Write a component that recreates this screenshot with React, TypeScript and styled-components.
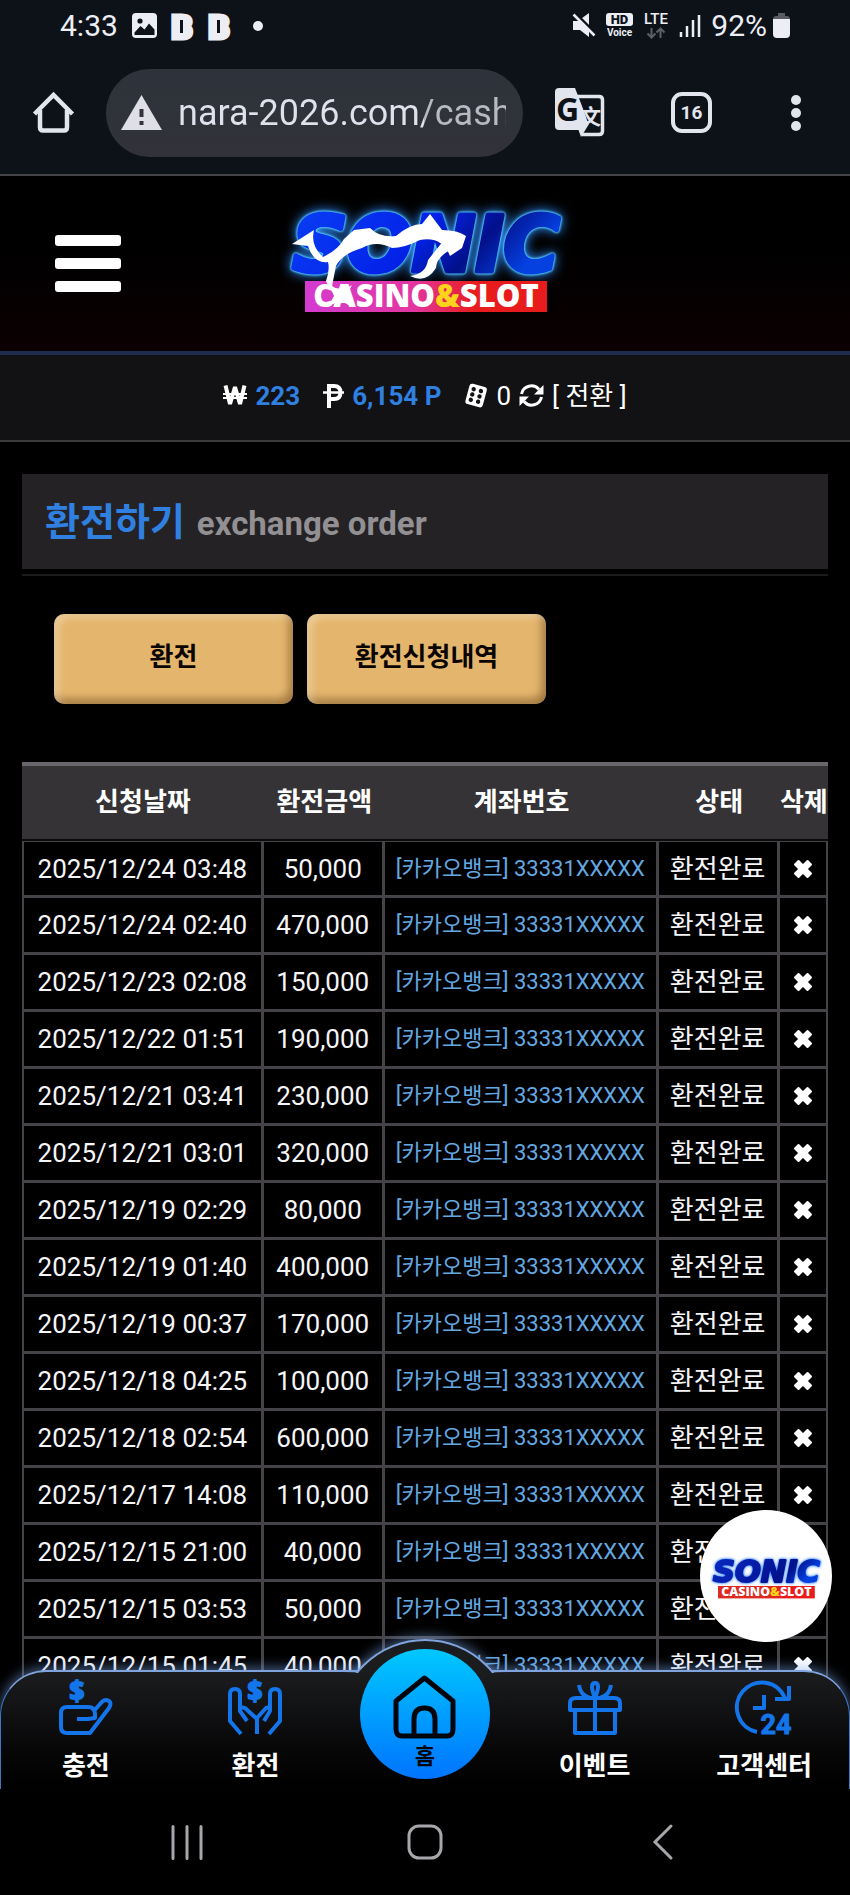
import { ReactElement, ReactNode } from 'react';
import styled, { createGlobalStyle } from 'styled-components';

const BLUE = '#2f80e0';
const ICON_BLUE = '#1474ea';
const LINE = '#454347';

const GlobalStyle = createGlobalStyle`
    *, *::before, *::after {
        box-sizing: border-box;
    }
    body {
        margin: 0;
        background: #000;
        color: #fff;
        font-family: Roboto, 'Noto Sans CJK KR', sans-serif;
        font-size: 26px;
        line-height: 32px;
    }
    button {
        padding: 0;
        border: 0;
        background: none;
        color: inherit;
        font: inherit;
        cursor: pointer;
    }
    a {
        color: inherit;
        text-decoration: none;
    }
    svg {
        display: block;
        flex: none;
        overflow: visible;
    }
`;

const Screen = styled.div`
    display: flex;
    flex-direction: column;
    height: 100vh;
    overflow: hidden;
`;

const StatusBar = styled.div`
    display: flex;
    align-items: center;
    justify-content: space-between;
    flex: none;
    height: 51px;
    padding: 0 60px;
    background: #0d1219;
    color: #eceef4;
    font-size: 30px;
`;

const StatusGroup = styled.div<{ $gap: number }>`
    display: flex;
    align-items: center;
    gap: ${({ $gap }) => $gap}px;
`;

const BrowserBar = styled.div`
    display: flex;
    align-items: center;
    gap: 32px;
    flex: none;
    height: 125px;
    padding: 0 36px 0 33px;
    border-bottom: 2px solid #444448;
    background: #0d1219;
    color: #e2e4ee;
`;

const Address = styled.label`
    display: flex;
    align-items: center;
    gap: 16px;
    flex: 1 1 auto;
    min-width: 0;
    height: 88px;
    padding: 0 17px 0 15px;
    border-radius: 44px;
    background: linear-gradient(#2d333b, #323239);
`;

const AddressInput = styled.input`
    flex: 1 1 auto;
    min-width: 0;
    padding: 0;
    border: 0;
    outline: 0;
    background: linear-gradient(90deg, #dfe1ec 246px, #b7bac3 246px);
    background-clip: text;
    color: transparent;
    font-family: Roboto, sans-serif;
    font-size: 36px;
    line-height: 48px;
`;

const BrowserActions = styled.div`
    display: flex;
    align-items: center;
    gap: 66px;
`;

const TabCount = styled.button`
    width: 41px;
    height: 41px;
    border: 4px solid #e2e4ee;
    border-radius: 11px;
    font-size: 19px;
    font-weight: 700;
    line-height: 32px;
`;

const Viewport = styled.div`
    position: relative;
    flex: 1 1 auto;
    min-height: 0;
    overflow: hidden;
`;

const Scroller = styled.div`
    height: 100%;
    padding-bottom: 118px;
    overflow-y: auto;
    scrollbar-width: none;
`;

const Header = styled.header`
    display: grid;
    grid-template-columns: 1fr auto 1fr;
    align-items: center;
    height: 179px;
    padding: 0 55px;
    border-bottom: 4px solid #1e2c4e;
    background: linear-gradient(#000 40%, #0b0002);
`;

const LogoLink = styled.a`
    padding-bottom: 16px;
`;

const MenuButton = styled.button`
    display: flex;
    flex-direction: column;
    gap: 12px;
    width: 66px;
    > span {
        height: 11px;
        border-radius: 3px;
        background: #fff;
    }
`;

const Wallet = styled.div`
    display: flex;
    align-items: center;
    justify-content: center;
    gap: 23px;
    height: 87px;
    padding-bottom: 4px;
    border-bottom: 2px solid #3b3a3d;
    background: #121113;
`;

const WalletItem = styled.div`
    display: flex;
    align-items: center;
    gap: 8px;
    white-space: nowrap;
    > strong {
        color: ${BLUE};
        font-weight: 700;
    }
`;

const Content = styled.main`
    padding: 32px 22px 0;
`;

const TitleBar = styled.div`
    padding-bottom: 5px;
    border-bottom: 2px solid #1a1a1c;
`;

const Title = styled.h1`
    display: flex;
    align-items: baseline;
    gap: 12px;
    height: 95px;
    margin: 0;
    padding: 20px 23px;
    background: #242225;
    color: ${BLUE};
    font-size: 38px;
    font-weight: 700;
    line-height: 56px;
    > small {
        color: #929093;
        font-size: 33px;
    }
`;

const Tabs = styled.div`
    display: flex;
    gap: 14px;
    padding: 38px 32px 58px;
`;

const TabButton = styled.button`
    flex: 0 1 239px;
    height: 90px;
    padding-bottom: 4px;
    border-radius: 10px;
    background: #e4b66d;
    box-shadow: inset 5px 4px 7px rgba(255, 255, 255, 0.3), inset -4px -5px 8px rgba(60, 30, 0, 0.4);
    color: #0a0503;
    font-weight: 700;
`;

const Table = styled.table`
    width: 100%;
    table-layout: fixed;
    border-spacing: 0;
    border-top: 4px solid #69676b;
    text-align: center;
    white-space: nowrap;
`;

const Col = styled.col<{ $width: number }>`
    width: ${({ $width }) => $width}%;
`;

const Th = styled.th`
    height: 75px;
    padding: 0 0 2px;
    border-bottom: 2px solid #0a0a0b;
    background: #353336;
    font-weight: 700;
`;

const Td = styled.td<{ $account?: boolean }>`
    height: 57px;
    padding: 0;
    border-right: 3px solid ${LINE};
    border-bottom: 3px solid ${LINE};
    color: ${({ $account }) => ($account ? '#64a9e2' : '#f6f6f8')};
    font-size: ${({ $account }) => ($account ? 22 : 26)}px;
    &:first-child {
        border-left: 2px solid ${LINE};
    }
    &:last-child {
        border-right-width: 2px;
    }
    tr:first-child > & {
        border-top: 1px solid ${LINE};
    }
`;

const DeleteButton = styled.button`
    display: block;
    margin: 0 auto;
`;

const Messenger = styled.a`
    position: absolute;
    right: 18px;
    bottom: 147px;
    display: flex;
    align-items: center;
    justify-content: center;
    width: 132px;
    height: 132px;
    border-radius: 50%;
    background: #fff;
`;

const BottomNav = styled.nav`
    position: absolute;
    right: 0;
    bottom: 0;
    left: 0;
    display: grid;
    grid-template-columns: repeat(5, 1fr);
    height: 119px;
    border: 1px solid #3d76c4;
    border-top: 2px solid #7fa3dc;
    border-bottom: 0;
    border-radius: 46px 46px 0 0;
    background: linear-gradient(#1b1c1e, #060607 70%, #000);
    box-shadow: 0 -3px 12px rgba(125, 170, 240, 0.5);
`;

/* only the cap that rises above the bar is painted */
const HomeArch = styled.div`
    position: absolute;
    top: -33px;
    left: calc(50% - 88px);
    width: 176px;
    height: 176px;
    border: 2px solid #7fa3dc;
    border-radius: 50%;
    background: #1b1c1e;
    box-shadow: 0 -3px 12px rgba(125, 170, 240, 0.5);
    clip-path: inset(-20px -20px calc(100% - 34px) -20px);
`;

const NavLink = styled.a`
    display: flex;
    flex-direction: column;
    align-items: center;
    gap: 15px;
    padding-top: 9px;
    font-weight: 700;
`;

const HomeLink = styled.a`
    position: relative;
    justify-self: center;
    display: flex;
    flex-direction: column;
    align-items: center;
    gap: 2px;
    width: 130px;
    height: 130px;
    margin-top: -23px;
    padding-top: 26px;
    border-radius: 50%;
    background: linear-gradient(#00c8ff, #0074ff);
    color: #02060c;
    font-size: 22px;
    font-weight: 700;
`;

const SystemNav = styled.div`
    display: grid;
    grid-template-columns: repeat(3, 1fr);
    justify-items: center;
    align-items: center;
    flex: none;
    height: 106px;
    padding: 0 8%;
    background: #000;
`;

const LogoWord = styled.text<{ $bright?: boolean }>`
    font: oblique 700 76px 'DejaVu Sans', sans-serif;
    stroke-width: 5px;
    stroke-linejoin: round;
    paint-order: stroke;
    text-anchor: middle;
    filter: ${({ $bright }) =>
        $bright
            ? 'drop-shadow(0 0 1px #6fe4ff) drop-shadow(0 0 1px #3fc4ff) drop-shadow(0 0 6px #2f8cff)'
            : 'drop-shadow(0 0 2px #2f7cff) drop-shadow(0 0 4px #7fb4ff)'};
`;

interface LogoProps {
    id: string;
    width: number;
    lightning?: boolean;
}

const Logo = ({ id, width, lightning }: LogoProps): ReactElement => (
    <svg width={width} height={Math.round((width * 124) / 310)} viewBox="0 0 310 124" role="img" aria-label="SONIC CASINO&SLOT">
        <defs>
            <linearGradient id={`${id}-band`}>
                <stop offset="0" stopColor={lightning ? '#d43bd0' : '#dd2a22'} />
                <stop offset="0.45" stopColor={lightning ? '#e336a0' : '#dd2a22'} />
                <stop offset="0.7" stopColor="#e81c1c" />
            </linearGradient>
            <linearGradient id={`${id}-fill`} x1="0" y1="0" x2="1" y2="0.3">
                <stop offset="0" stopColor={lightning ? '#0a3ff5' : '#0a2bc4'} />
                <stop offset="0.55" stopColor={lightning ? '#0322e8' : '#0418a0'} />
                <stop offset="0.78" stopColor="#02108a" />
                <stop offset="1" stopColor="#0540e0" />
            </linearGradient>
        </defs>
        <LogoWord x="156" y="77" $bright={lightning} fill={`url(#${id}-fill)`} stroke={`url(#${id}-fill)`}>
            SONIC
        </LogoWord>
        <rect x="35" y="87" width="242" height="31" fill={`url(#${id}-band)`} />
        <text
            x="156"
            y="113"
            fill="#fff"
            fontFamily="'Open Sans', sans-serif"
            fontSize="31"
            fontWeight="800"
            textAnchor="middle"
        >
            CASINO<tspan fill="#ffd21c">&amp;</tspan>SLOT
        </text>
        {lightning && (
            <g fill="#fff">
                <path d="M22 50L44 36Q40 51 53 63Q68 56 74 45L84 36L100 34Q110 44 126 42Q140 30 152 30L160 20L172 36Q188 36 196 42L192 54L180 62Q172 42 150 46Q134 54 122 54Q106 46 92 54Q72 60 66 72L62 92L76 101L64 100Q60 96 56 87Q60 76 58 68Q44 70 38 52Z" />
                <path d="M180 56Q166 64 166 74Q156 90 140 82Q156 80 158 66L174 46Z" />
                <path d="M60 92Q72 98 82 91Q76 100 80 112L70 106L58 113L64 102Z" />
            </g>
        )}
    </svg>
);

const PictureIcon = (): ReactElement => (
    <svg width="25" height="25" viewBox="0 0 25 25">
        <rect width="25" height="25" rx="4" fill="#eceef4" />
        <circle cx="8" cy="8" r="2.6" fill="#0d1219" />
        <path d="M2.500 19.500L8.500 13L12.500 16.500L17 10.500L22.500 16.500V22H2.500Z" fill="#0d1219" />
    </svg>
);

const BetIcon = (): ReactElement => (
    <svg width="23" height="44" viewBox="0 0 23 44" aria-hidden="true">
        <text
            x="11"
            y="34"
            fill="#eceef4"
            stroke="#eceef4"
            strokeWidth="5"
            fontSize="32"
            fontWeight="700"
            textAnchor="middle"
            fontFamily="Roboto, sans-serif"
        >
            B
        </text>
        <rect x="8" y="16" width="6" height="14" fill="#eceef4" />
        <rect x="9" y="16" width="3" height="13" fill="#0d1219" />
    </svg>
);

const DotIcon = (): ReactElement => (
    <svg width="24" height="10" viewBox="0 0 24 10">
        <circle cx="13" cy="5" r="5" fill="#eceef4" />
    </svg>
);

const MuteIcon = (): ReactElement => (
    <svg width="24" height="25" viewBox="0 0 24 25">
        <path d="M1 8H6L17 0V24L8 17H1Z" fill="#eceef4" />
        <path d="M3 0L24 21" stroke="#0d1219" strokeWidth="3" />
        <path d="M1.500 1.500L22.500 22.500" stroke="#eceef4" strokeWidth="2.500" />
    </svg>
);

const HdVoiceIcon = (): ReactElement => (
    <svg width="27" height="25" viewBox="0 0 27 25" fontFamily="Roboto, sans-serif" textAnchor="middle">
        <rect width="27" height="13" rx="3" fill="#eceef4" />
        <text x="13.500" y="11" fontSize="13" fontWeight="900" fill="#0d1219">
            HD
        </text>
        <text x="13.500" y="22.500" fontSize="10" fontWeight="700" fill="#eceef4">
            Voice
        </text>
    </svg>
);

const LteIcon = (): ReactElement => (
    <svg width="26" height="34" viewBox="0 -4 26 34">
        <text x="13" y="11" fill="#eceef4" fontSize="15" fontWeight="500" textAnchor="middle" fontFamily="Roboto, sans-serif">
            LTE
        </text>
        <path d="M8.500 15V24M4.500 20.500L8.500 24.500L12.500 20.500M17.500 25V16M13.500 19.500L17.500 15.500L21.500 19.500" fill="none" stroke="#5b6068" strokeWidth="2" />
    </svg>
);

const SignalIcon = (): ReactElement => (
    <svg width="22" height="24" viewBox="0 0 22 24">
        <path d="M2 18V23M8 12V23M14 6V23M20 1V23" stroke="#eceef4" strokeWidth="2.500" />
    </svg>
);

const BatteryIcon = (): ReactElement => (
    <svg width="17" height="25" viewBox="0 0 17 25">
        <path d="M5 0H12V3H14Q17 3 17 7H0Q0 3 3 3H5Z" fill="#595b61" />
        <path d="M0 6H17V21Q17 25 13 25H4Q0 25 0 21Z" fill="#eceef4" />
    </svg>
);

const BrowserHomeIcon = (): ReactElement => (
    <svg width="41" height="42" viewBox="0 0 41 42" fill="none" stroke="#e2e4ee" strokeWidth="4.500" strokeLinejoin="round">
        <path d="M1.500 22L20.500 3L39.500 22" strokeLinejoin="miter" />
        <path d="M7 18V35Q7 38.500 10 38.500H31Q34 38.500 34 35V18" />
    </svg>
);

const WarningIcon = (): ReactElement => (
    <svg width="41" height="35" viewBox="0 0 41 35">
        <path d="M20.500 0L41 35H0Z" fill="#dfe0e6" />
        <path d="M20.500 14V22M20.500 26V30" stroke="#32343b" strokeWidth="4" />
    </svg>
);

const TranslateIcon = (): ReactElement => (
    <svg width="50" height="51" viewBox="0 0 50 51">
        <path d="M22 9.500H44Q47.500 9.500 47.500 13V44Q47.500 47.500 44 47.500H27" fill="none" stroke="#e2e4ee" strokeWidth="3.500" />
        <path d="M4 1H20L34 37L26 50L23.500 43H4Q0 43 0 39V5Q0 1 4 1Z" fill="#e2e4ee" />
        <path d="M25 12H45V44H38L32 33Z" fill="#0d1219" />
        <text x="1" y="34" fill="#0d1219" fontFamily="'Open Sans', sans-serif" fontSize="32" fontWeight="700">
            G
        </text>
        <text x="25" y="37" fill="#e2e4ee" fontFamily="'Noto Sans CJK SC', sans-serif" fontSize="21" fontWeight="700">
            文
        </text>
    </svg>
);

const MoreIcon = (): ReactElement => (
    <svg width="36" height="38" viewBox="0 0 36 38" fill="#e2e4ee">
        <circle cx="18" cy="6" r="5" />
        <circle cx="18" cy="19" r="5" />
        <circle cx="18" cy="32" r="5" />
    </svg>
);

const WonIcon = (): ReactElement => (
    <svg width="24" height="21" viewBox="0 0 24 21" fill="none" stroke="#fff">
        <path d="M2.500 0.500L7 19L12 2L17 19L21.500 0.500" strokeWidth="4" strokeLinejoin="bevel" />
        <path d="M0 9H24M0 13H24" strokeWidth="1.800" />
    </svg>
);

const PesoIcon = (): ReactElement => (
    <svg width="21" height="24" viewBox="0 0 21 24" fill="none" stroke="#fff">
        <path d="M6 24V2H11Q17.500 2 17.500 8.500T11 15H6" strokeWidth="4" />
        <path d="M0 8.500H21" strokeWidth="2.500" />
    </svg>
);

const DiceIcon = (): ReactElement => (
    <svg width="24" height="24" viewBox="0 0 24 24">
        <g transform="rotate(15 12 12)">
            <rect x="3" y="1" width="18" height="21" rx="3" fill="#fff" />
            <g fill="#121113">
                <circle cx="8" cy="6" r="2.200" />
                <circle cx="15.500" cy="6" r="2.200" />
                <circle cx="8" cy="11.500" r="2.200" />
                <circle cx="15.500" cy="11.500" r="2.200" />
                <circle cx="8" cy="17" r="2.200" />
                <circle cx="15.500" cy="17" r="2.200" />
            </g>
        </g>
    </svg>
);

const RefreshIcon = (): ReactElement => (
    <svg width="25" height="25" viewBox="0 0 25 25">
        <path d="M2.500 11A10 10 0 0 1 20 6.500M22.500 14A10 10 0 0 1 5 18.500" fill="none" stroke="#fff" strokeWidth="3" />
        <path d="M24.500 2V11.500H15ZM0.500 23V13.500H10Z" fill="#fff" />
    </svg>
);

const CrossIcon = (): ReactElement => (
    <svg width="20" height="20" viewBox="0 0 20 20">
        <path
            d="M5.500 2L10 6.500L14.500 2L18 5.500L13.500 10L18 14.500L14.500 18L10 13.500L5.500 18L2 14.500L6.500 10L2 5.500Z"
            fill="#fff"
            stroke="#fff"
            strokeWidth="2"
            strokeLinejoin="round"
        />
    </svg>
);

const NavIcon = ({ children }: { children: ReactNode }): ReactElement => (
    <svg
        width="54"
        height="54"
        viewBox="0 0 54 54"
        fill="none"
        stroke={ICON_BLUE}
        strokeWidth="4"
        strokeLinejoin="round"
        aria-hidden="true"
    >
        {children}
    </svg>
);

const Dollar = ({ x }: { x: number }): ReactElement => (
    <text
        x={x}
        y="20"
        fill={ICON_BLUE}
        stroke={ICON_BLUE}
        strokeWidth="2"
        fontFamily="'Open Sans', sans-serif"
        fontSize="26"
        fontWeight="700"
        textAnchor="middle"
    >
        $
    </text>
);

const DepositIcon = (): ReactElement => (
    <NavIcon>
        <Dollar x={18} />
        <path d="M18 38H29L36 37V33Q36 26 29 26H8Q2 26 2 32V46Q2 52 8 52H31L50 27Q54 20 47 19Q44 19 41 23L34 31" />
    </NavIcon>
);

const WithdrawIcon = (): ReactElement => (
    <NavIcon>
        <Dollar x={27} />
        <path d="M13 53L2 40V13Q2 8 7 8Q12 8 12 13V30L19 40M12 26L17 27L29 38V53M41 53L52 40V13Q52 8 47 8Q42 8 42 13V30L36 40M42 26L38 27L29 37" />
    </NavIcon>
);

const GiftIcon = (): ReactElement => (
    <NavIcon>
        <path d="M2 29V22Q2 17 8 17H46Q52 17 52 22V29ZM7 29V52H47V29M27 17V52M27 17Q21 2 27 2Q33 2 27 17M11 4Q12 14 22 17M43 4Q42 14 32 17" />
    </NavIcon>
);

const SupportIcon = (): ReactElement => (
    <NavIcon>
        <path d="M20 51A25 25 0 1 1 48 17M52 5V18H38M27 14V27H16" />
        <text
            x="39"
            y="53"
            fill={ICON_BLUE}
            stroke={ICON_BLUE}
            strokeWidth="1"
            fontFamily="Roboto, sans-serif"
            fontSize="27"
            fontWeight="700"
            textAnchor="middle"
        >
            24
        </text>
    </NavIcon>
);

const HomeIcon = (): ReactElement => (
    <svg width="63" height="64" viewBox="0 0 63 64" fill="none" stroke="#02060c" strokeWidth="5" strokeLinejoin="round" aria-hidden="true">
        <path d="M3 26L31.500 3L60 26V54Q60 61 54 61H9Q3 61 3 54ZM21 61V44Q21 33 31.500 33T42 44V61" />
    </svg>
);

const RecentsIcon = (): ReactElement => (
    <svg width="32" height="35" viewBox="0 0 32 35">
        <path d="M2 1.500V33.500M16 1.500V33.500M30 1.500V33.500" stroke="#a8a6aa" strokeWidth="3" strokeLinecap="round" />
    </svg>
);

const SystemHomeIcon = (): ReactElement => (
    <svg width="36" height="36" viewBox="0 0 36 36">
        <rect x="2" y="2" width="32" height="32" rx="10" fill="none" stroke="#a8a6aa" strokeWidth="3" />
    </svg>
);

const BackIcon = (): ReactElement => (
    <svg width="20" height="36" viewBox="0 0 20 36">
        <path d="M18 2L2 18L18 34" fill="none" stroke="#a8a6aa" strokeWidth="3" strokeLinecap="round" />
    </svg>
);

const orders = [
    ['2025/12/24 03:48', '50,000'],
    ['2025/12/24 02:40', '470,000'],
    ['2025/12/23 02:08', '150,000'],
    ['2025/12/22 01:51', '190,000'],
    ['2025/12/21 03:41', '230,000'],
    ['2025/12/21 03:01', '320,000'],
    ['2025/12/19 02:29', '80,000'],
    ['2025/12/19 01:40', '400,000'],
    ['2025/12/19 00:37', '170,000'],
    ['2025/12/18 04:25', '100,000'],
    ['2025/12/18 02:54', '600,000'],
    ['2025/12/17 14:08', '110,000'],
    ['2025/12/15 21:00', '40,000'],
    ['2025/12/15 03:53', '50,000'],
    ['2025/12/15 01:45', '40,000'],
];

const OrdersTable = (): ReactElement => (
    <Table>
        <colgroup>
            <Col $width={30} />
            <Col $width={15} />
            <Col $width={34} />
            <Col $width={15} />
            <Col $width={6} />
        </colgroup>
        <thead>
            <tr>
                <Th>신청날짜</Th>
                <Th>환전금액</Th>
                <Th>계좌번호</Th>
                <Th>상태</Th>
                <Th>삭제</Th>
            </tr>
        </thead>
        <tbody>
            {orders.map(([date, amount]) => (
                <tr key={date}>
                    <Td>{date}</Td>
                    <Td>{amount}</Td>
                    <Td $account>[카카오뱅크] 33331XXXXX</Td>
                    <Td>환전완료</Td>
                    <Td>
                        <DeleteButton aria-label="삭제">
                            <CrossIcon />
                        </DeleteButton>
                    </Td>
                </tr>
            ))}
        </tbody>
    </Table>
);

const App = (): ReactElement => (
    <Screen>
        <GlobalStyle />
        <StatusBar>
            <StatusGroup $gap={14}>
                <span>4:33</span>
                <PictureIcon />
                <BetIcon />
                <BetIcon />
                <DotIcon />
            </StatusGroup>
            <StatusGroup $gap={10}>
                <MuteIcon />
                <HdVoiceIcon />
                <LteIcon />
                <SignalIcon />
                <StatusGroup $gap={6}>
                    <span>92%</span>
                    <BatteryIcon />
                </StatusGroup>
            </StatusGroup>
        </StatusBar>
        <BrowserBar>
            <button aria-label="Home">
                <BrowserHomeIcon />
            </button>
            <Address>
                <WarningIcon />
                <AddressInput aria-label="Address" defaultValue="nara-2026.com/cash" />
            </Address>
            <BrowserActions>
                <button aria-label="Translate">
                    <TranslateIcon />
                </button>
                <TabCount>16</TabCount>
                <button aria-label="More">
                    <MoreIcon />
                </button>
            </BrowserActions>
        </BrowserBar>
        <Viewport>
            <Scroller>
                <Header>
                    <MenuButton aria-label="메뉴">
                        <span />
                        <span />
                        <span />
                    </MenuButton>
                    <LogoLink href="#main">
                        <Logo id="header" width={310} lightning />
                    </LogoLink>
                </Header>
                <Wallet>
                    <WalletItem>
                        <WonIcon />
                        <strong>223</strong>
                    </WalletItem>
                    <WalletItem>
                        <PesoIcon />
                        <strong>6,154 P</strong>
                    </WalletItem>
                    <WalletItem>
                        <DiceIcon />
                        <span>0</span>
                        <RefreshIcon />
                        <button>[ 전환 ]</button>
                    </WalletItem>
                </Wallet>
                <Content id="main">
                    <TitleBar>
                        <Title>
                            환전하기<small>exchange order</small>
                        </Title>
                    </TitleBar>
                    <Tabs>
                        <TabButton>환전</TabButton>
                        <TabButton>환전신청내역</TabButton>
                    </Tabs>
                    <OrdersTable />
                </Content>
            </Scroller>
            <BottomNav>
                <HomeArch />
                <NavLink href="#deposit">
                    <DepositIcon />
                    충전
                </NavLink>
                <NavLink href="#withdraw">
                    <WithdrawIcon />
                    환전
                </NavLink>
                <HomeLink href="#home">
                    <HomeIcon />홈
                </HomeLink>
                <NavLink href="#event">
                    <GiftIcon />
                    이벤트
                </NavLink>
                <NavLink href="#support">
                    <SupportIcon />
                    고객센터
                </NavLink>
            </BottomNav>
            <Messenger href="#messenger">
                <Logo id="messenger" width={124} />
            </Messenger>
        </Viewport>
        <SystemNav>
            <button aria-label="Recents">
                <RecentsIcon />
            </button>
            <button aria-label="System home">
                <SystemHomeIcon />
            </button>
            <button aria-label="Back">
                <BackIcon />
            </button>
        </SystemNav>
    </Screen>
);

export default App;
